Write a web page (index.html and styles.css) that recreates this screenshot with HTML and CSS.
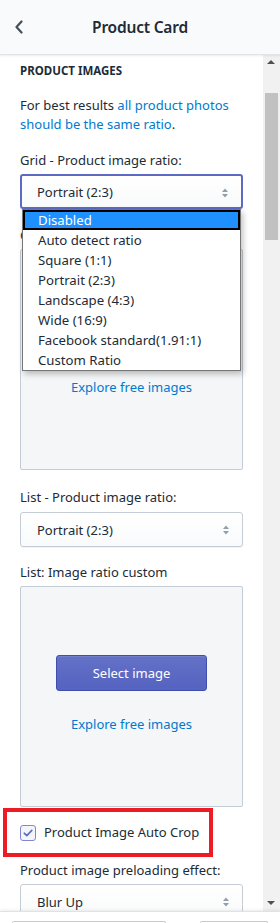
FILE: index.html
```html
<!DOCTYPE html>
<html>
<head>
<meta charset="utf-8">
<link rel="stylesheet" href="styles.css">
</head>
<body>
<div class="app">
  <header class="header">
    <span class="back"><svg width="10" height="14" viewBox="0 0 10 14"><path d="M7.5 1.5 L2.5 7 L7.5 12.5" fill="none" stroke="#454f5b" stroke-width="2.2" stroke-linecap="round" stroke-linejoin="round"/></svg></span>
    <h1 class="title">Product Card</h1>
  </header>
  <div class="main">
    <div class="content">
      <h2 class="heading">PRODUCT IMAGES</h2>
      <p class="note">For best results <span class="link">all product photos should be the same ratio</span>.</p>

      <div class="field field-first">
        <div class="label">Grid - Product image ratio:</div>
        <div class="select focused">
          <span>Portrait (2:3)</span>
          <svg class="arrows" width="8" height="12" viewBox="0 0 8 12"><path d="M4 1.5 L7 5 H1 Z M4 10.5 L7 7 H1 Z" fill="#919eab"/></svg>
          <ul class="menu">
            <li class="opt active">Disabled</li>
            <li class="opt">Auto detect ratio</li>
            <li class="opt">Square (1:1)</li>
            <li class="opt">Portrait (2:3)</li>
            <li class="opt">Landscape (4:3)</li>
            <li class="opt">Wide (16:9)</li>
            <li class="opt">Facebook standard(1.91:1)</li>
            <li class="opt">Custom Ratio</li>
          </ul>
        </div>
      </div>

      <div class="field">
        <div class="label">Grid: Image ratio custom</div>
        <div class="picker">
          <button class="btn">Select image</button>
          <span class="explore">Explore free images</span>
        </div>
      </div>

      <div class="field field-list">
        <div class="label">List - Product image ratio:</div>
        <div class="select">
          <span>Portrait (2:3)</span>
          <svg class="arrows" width="8" height="12" viewBox="0 0 8 12"><path d="M4 1.5 L7 5 H1 Z M4 10.5 L7 7 H1 Z" fill="#919eab"/></svg>
        </div>
      </div>

      <div class="field field-custom">
        <div class="label">List: Image ratio custom</div>
        <div class="picker">
          <button class="btn">Select image</button>
          <span class="explore">Explore free images</span>
        </div>
      </div>

      <div class="check-row">
        <span class="checkbox"><svg width="10" height="8" viewBox="0 0 10 8"><path d="M1.2 4.2 L3.8 6.6 L8.8 1.4" fill="none" stroke="#5c6ac4" stroke-width="1.6" stroke-linecap="round" stroke-linejoin="round"/></svg></span>
        <span class="check-label">Product Image Auto Crop</span>
        <span class="highlight"></span>
      </div>

      <div class="field field-preload">
        <div class="label">Product image preloading effect:</div>
        <div class="select">
          <span>Blur Up</span>
          <svg class="arrows" width="8" height="12" viewBox="0 0 8 12"><path d="M4 1.5 L7 5 H1 Z M4 10.5 L7 7 H1 Z" fill="#919eab"/></svg>
        </div>
      </div>
    </div>
    <div class="scrollbar">
      <span class="sb-up"></span>
      <span class="sb-thumb"></span>
      <span class="sb-space"></span>
      <span class="sb-down"></span>
    </div>
  </div>
  <footer class="footer">
    <span class="fbtn fbtn-wide"></span>
    <span class="fbtn fbtn-small"></span>
  </footer>
</div>
</body>
</html>
```

FILE: styles.css
```css
* { box-sizing: border-box; }
html, body { margin: 0; padding: 0; }
body {
  width: 280px;
  height: 923px;
  overflow: hidden;
  background: #fff;
  font-family: "Noto Sans", "Open Sans", sans-serif;
  color: #212b36;
  font-size: 13px;
}
.app {
  display: flex;
  flex-direction: column;
  height: 923px;
}
.header {
  height: 55px;
  flex: none;
  background: #f9fafb;
  border-bottom: 1px solid #e1e3e5;
  box-shadow: 0 1px 2px rgba(0,0,0,0.08);
  display: flex;
  align-items: center;
  justify-content: center;
  position: relative;
  z-index: 2;
}
.back {
  position: absolute;
  left: 14px;
  top: 20px;
  display: flex;
}
.title {
  margin: 0;
  font-size: 15.5px;
  font-weight: 600;
  color: #212b36;
  letter-spacing: -0.2px;
}
.main {
  flex: 1;
  display: flex;
  min-height: 0;
}
.content {
  flex: 1;
  overflow: hidden;
  padding: 8px 20px 0 20px;
}
.heading {
  margin: 0;
  font-size: 11.5px;
  line-height: 16px;
  font-weight: 700;
  color: #212b36;
}
.note {
  margin: 17px 0 0;
  line-height: 19px;
  font-size: 13px;
}
.link { color: #007ace; }
.field { margin-top: 16px; }
.field-list { margin-top: 17px; }
.field-custom { margin-top: 15px; }
.field-preload { margin-top: 3px; }
.label {
  line-height: 20px;
  font-size: 13px;
  margin-bottom: 4px;
}
.field-list .label { margin-bottom: 5px; }
.select {
  position: relative;
  height: 35px;
  border: 1px solid #c4cdd5;
  border-radius: 3px;
  background: linear-gradient(#fff, #f9fafb);
  box-shadow: 0 1px 0 rgba(22,29,37,0.05);
  display: flex;
  align-items: center;
  padding-left: 16px;
  font-size: 13px;
}
.select.focused {
  border: 2px solid #5c6ac4;
  padding-left: 15px;
}
.arrows {
  position: absolute;
  right: 12px;
  top: 11px;
}
.menu {
  position: absolute;
  left: 0;
  top: 33px;
  width: 219px;
  margin: 0;
  padding: 0;
  list-style: none;
  background: #fff;
  border: 1px solid #767676;
  box-shadow: 2px 3px 6px rgba(0,0,0,0.25);
  z-index: 5;
}
.opt {
  height: 20px;
  line-height: 20px;
  padding-left: 15px;
  font-size: 13.2px;
  color: #212b36;
  white-space: nowrap;
}
.opt.active {
  background: #1e90ff;
  color: #fff;
  box-shadow: inset 0 0 0 2px #000;
}
.picker {
  height: 221px;
  border: 1px solid #c4cdd5;
  border-radius: 2px;
  background: #f4f6f8;
  display: flex;
  flex-direction: column;
  align-items: center;
  padding-top: 68px;
}
.btn {
  width: 151px;
  height: 36px;
  border: 1px solid #3f4eae;
  border-radius: 3px;
  background: linear-gradient(180deg, #6371c7, #5563c1);
  color: #fff;
  font-family: inherit;
  font-size: 13px;
  box-shadow: inset 0 1px 0 rgba(255,255,255,0.1);
}
.explore {
  margin-top: 23px;
  line-height: 20px;
  font-size: 13px;
  color: #007ace;
}
.check-row {
  position: relative;
  height: 50px;
  display: flex;
  align-items: center;
  gap: 8px;
}
.checkbox {
  width: 16px;
  height: 16px;
  border: 1px solid #7f88d0;
  border-radius: 3px;
  background: #f4f5fb;
  display: flex;
  align-items: center;
  justify-content: center;
  margin-top: 2px;
}
.check-label {
  font-size: 13px;
  line-height: 20px;
}
.highlight {
  position: absolute;
  left: -17px;
  top: 1px;
  width: 210px;
  height: 49px;
  border: 4px solid #ed1c24;
  pointer-events: none;
}
.scrollbar {
  width: 17px;
  flex: none;
  background: #f1f1f1;
  display: flex;
  flex-direction: column;
  align-items: center;
}
.sb-up, .sb-down {
  height: 17px;
  width: 17px;
  flex: none;
  position: relative;
}
.sb-up::after, .sb-down::after {
  content: "";
  position: absolute;
  left: 4px;
  width: 0;
  height: 0;
  border-left: 4px solid transparent;
  border-right: 4px solid transparent;
}
.sb-up::after { top: 5px; border-bottom: 4px solid #505050; }
.sb-down::after { top: 7px; border-top: 4px solid #505050; }
.sb-thumb {
  width: 13px;
  height: 147px;
  margin-top: 21px;
  background: #c1c1c1;
  flex: none;
}
.sb-space { flex: 1; }
.footer {
  height: 12px;
  flex: none;
  background: #fff;
  border-top: 1px solid #dfe3e8;
  box-shadow: 0 -1px 3px rgba(0,0,0,0.08);
  display: flex;
  align-items: flex-end;
  padding: 0 12px 0 12px;
  gap: 34px;
  position: relative;
  z-index: 2;
}
.fbtn {
  height: 2px;
  border: 1px solid #c4cdd5;
  border-bottom: none;
  border-radius: 3px 3px 0 0;
}
.fbtn-wide { width: 154px; }
.fbtn-small { width: 68px; }
```
